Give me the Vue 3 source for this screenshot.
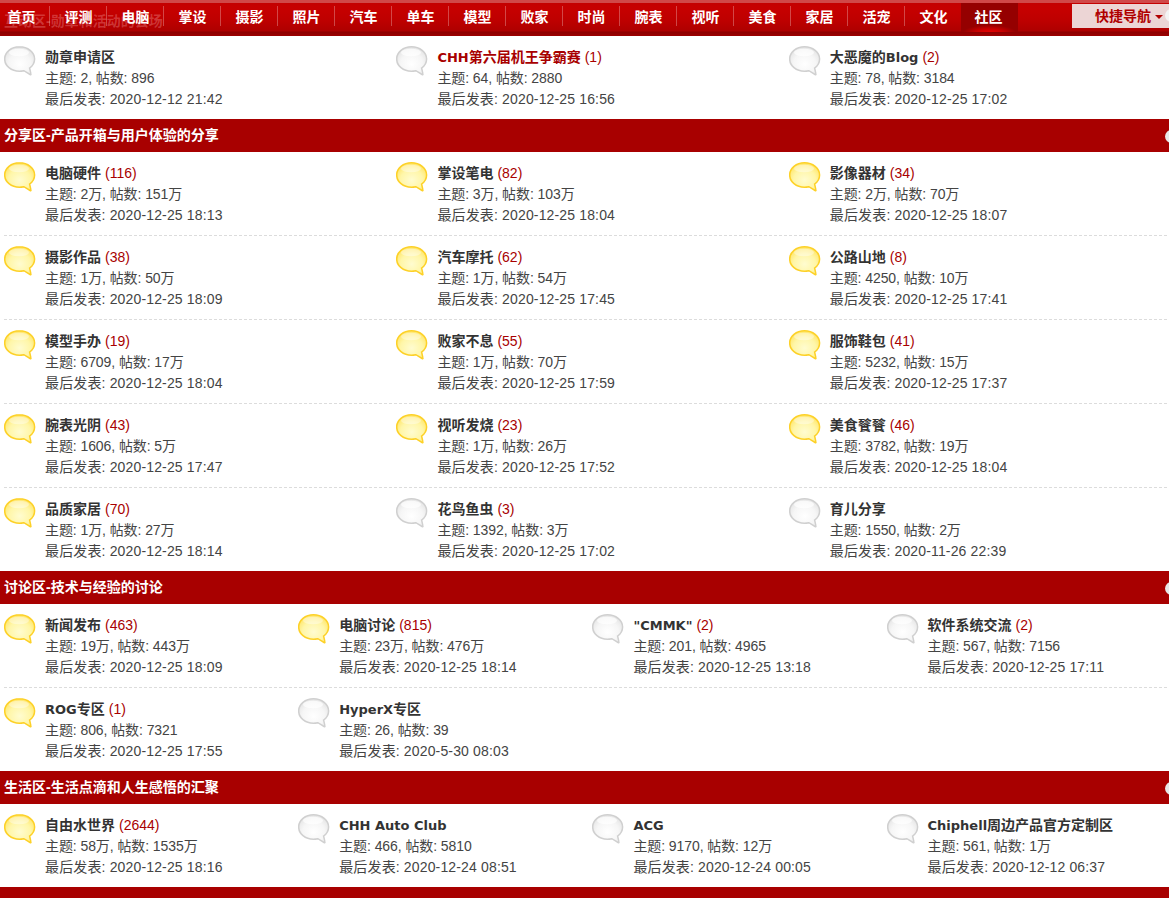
<script setup>
const navItems = ['首页','评测','电脑','掌设','摄影','照片','汽车','单车','模型','败家','时尚','腕表','视听','美食','家居','活宠','文化','社区']

const s1 = [[
  { name:'勋章申请区', stats:'主题: 2, 帖数: 896', last:'最后发表: 2020-12-12 21:42' },
  { name:'CHH第六届机王争霸赛', count:1, red:true, stats:'主题: 64, 帖数: 2880', last:'最后发表: 2020-12-25 16:56' },
  { name:'大恶魔的Blog', count:2, stats:'主题: 78, 帖数: 3184', last:'最后发表: 2020-12-25 17:02' },
]]
const s2 = [[
  { name:'电脑硬件', count:116, on:1, stats:'主题: 2万, 帖数: 151万', last:'最后发表: 2020-12-25 18:13' },
  { name:'掌设笔电', count:82, on:1, stats:'主题: 3万, 帖数: 103万', last:'最后发表: 2020-12-25 18:04' },
  { name:'影像器材', count:34, on:1, stats:'主题: 2万, 帖数: 70万', last:'最后发表: 2020-12-25 18:07' },
],[
  { name:'摄影作品', count:38, on:1, stats:'主题: 1万, 帖数: 50万', last:'最后发表: 2020-12-25 18:09' },
  { name:'汽车摩托', count:62, on:1, stats:'主题: 1万, 帖数: 54万', last:'最后发表: 2020-12-25 17:45' },
  { name:'公路山地', count:8, on:1, stats:'主题: 4250, 帖数: 10万', last:'最后发表: 2020-12-25 17:41' },
],[
  { name:'模型手办', count:19, on:1, stats:'主题: 6709, 帖数: 17万', last:'最后发表: 2020-12-25 18:04' },
  { name:'败家不息', count:55, on:1, stats:'主题: 1万, 帖数: 70万', last:'最后发表: 2020-12-25 17:59' },
  { name:'服饰鞋包', count:41, on:1, stats:'主题: 5232, 帖数: 15万', last:'最后发表: 2020-12-25 17:37' },
],[
  { name:'腕表光阴', count:43, on:1, stats:'主题: 1606, 帖数: 5万', last:'最后发表: 2020-12-25 17:47' },
  { name:'视听发烧', count:23, on:1, stats:'主题: 1万, 帖数: 26万', last:'最后发表: 2020-12-25 17:52' },
  { name:'美食餮餮', count:46, on:1, stats:'主题: 3782, 帖数: 19万', last:'最后发表: 2020-12-25 18:04' },
],[
  { name:'品质家居', count:70, on:1, stats:'主题: 1万, 帖数: 27万', last:'最后发表: 2020-12-25 18:14' },
  { name:'花鸟鱼虫', count:3, stats:'主题: 1392, 帖数: 3万', last:'最后发表: 2020-12-25 17:02' },
  { name:'育儿分享', stats:'主题: 1550, 帖数: 2万', last:'最后发表: 2020-11-26 22:39' },
]]
const s3 = [[
  { name:'新闻发布', count:463, on:1, stats:'主题: 19万, 帖数: 443万', last:'最后发表: 2020-12-25 18:09' },
  { name:'电脑讨论', count:815, on:1, stats:'主题: 23万, 帖数: 476万', last:'最后发表: 2020-12-25 18:14' },
  { name:'"CMMK"', count:2, stats:'主题: 201, 帖数: 4965', last:'最后发表: 2020-12-25 13:18' },
  { name:'软件系统交流', count:2, stats:'主题: 567, 帖数: 7156', last:'最后发表: 2020-12-25 17:11' },
],[
  { name:'ROG专区', count:1, on:1, stats:'主题: 806, 帖数: 7321', last:'最后发表: 2020-12-25 17:55' },
  { name:'HyperX专区', stats:'主题: 26, 帖数: 39', last:'最后发表: 2020-5-30 08:03' },
]]
const s4 = [[
  { name:'自由水世界', count:2644, on:1, stats:'主题: 58万, 帖数: 1535万', last:'最后发表: 2020-12-25 18:16' },
  { name:'CHH Auto Club', stats:'主题: 466, 帖数: 5810', last:'最后发表: 2020-12-24 08:51' },
  { name:'ACG', stats:'主题: 9170, 帖数: 12万', last:'最后发表: 2020-12-24 00:05' },
  { name:'Chiphell周边产品官方定制区', stats:'主题: 561, 帖数: 1万', last:'最后发表: 2020-12-12 06:37' },
]]

const sections = [
  { rows: s1, cols: 3 },
  { title:'分享区-产品开箱与用户体验的分享', rows: s2, cols: 3 },
  { title:'讨论区-技术与经验的讨论', rows: s3, cols: 4 },
  { title:'生活区-生活点滴和人生感悟的汇聚', rows: s4, cols: 4 },
  { title:'', rows: [], cols: 4 },
]

// Latin runs of a forum name are set a little smaller and wider than the CJK runs.
const parts = (name) => (name.match(/[\x00-\x7f]+|[^\x00-\x7f]+/g) || []).map((t) => ({
  t,
  latin: /^[\x00-\x7f]/.test(t),
}))
</script>

<template>
  <div class="page">
    <svg class="defs" width="0" height="0">
      <defs>
        <radialGradient id="bubble-on" cx="0.5" cy="0.62" r="0.62">
          <stop offset="0" stop-color="#fffcd0" />
          <stop offset="0.6" stop-color="#fff6a8" />
          <stop offset="1" stop-color="#ffe566" />
        </radialGradient>
        <radialGradient id="bubble-off" cx="0.5" cy="0.62" r="0.62">
          <stop offset="0" stop-color="#ffffff" />
          <stop offset="0.6" stop-color="#f6f6f6" />
          <stop offset="1" stop-color="#e4e4e4" />
        </radialGradient>
      </defs>
    </svg>

    <header class="nav">
      <span class="ghost">互动区-勋章和活动的会场</span>
      <ul class="nav-list">
        <li v-for="(item, i) in navItems" :key="item" class="nav-item" :class="{ active: i === navItems.length - 1 }">{{ item }}</li>
      </ul>
      <div class="quick">快捷导航<i class="caret"></i><i class="quick-dot"></i></div>
    </header>

    <section v-for="(sec, si) in sections" :key="si" class="section">
      <h2 v-if="sec.title !== undefined" class="bar">
        <span>{{ sec.title }}</span>
        <i class="toggle"></i>
      </h2>
      <div
        v-for="(row, ri) in sec.rows"
        :key="ri"
        class="row"
        :class="[sec.cols === 3 ? 'c3' : 'c4', { dashed: ri < sec.rows.length - 1 }]"
      >
        <div v-for="f in row" :key="f.name" class="forum">
          <svg class="bubble" width="32" height="30" viewBox="0 0 32 30">
            <path
              d="M15.500.8C7.200.8.700 6.200.700 13S7.200 25.200 15.500 25.200c1.500 0 3-.2 4.400-.5l6.200 3.800c.6.300 1 0 .8-.6l-1.300-5.900c3.200-2.200 5-5.600 5-9C30.600 6.200 23.800.8 15.500.8z"
              :fill="f.on ? 'url(#bubble-on)' : 'url(#bubble-off)'"
              :stroke="f.on ? '#fdd128' : '#d0d0d0'"
              stroke-width="1.5"
            />
            <ellipse cx="15" cy="6.500" rx="10" ry="3.800" fill="#fff" :opacity="f.on ? .4 : .7" />
          </svg>
          <div class="info">
            <div class="name-line">
              <b class="name" :class="{ red: f.red }"><span v-for="(p, pi) in parts(f.name)" :key="pi" :class="{ latin: p.latin }">{{ p.t }}</span></b>
              <span v-if="f.count" class="count">({{ f.count }})</span>
            </div>
            <div class="line stats">{{ f.stats }}</div>
            <div class="line last">{{ f.last }}</div>
          </div>
        </div>
      </div>
    </section>
  </div>
</template>

<style scoped>
.page {
  width: 1169px;
  height: 898px;
  overflow: hidden;
  position: relative;
  padding-top: 36px;
  box-sizing: border-box;
  background: #fff;
  font-family: "Liberation Sans", "Noto Sans CJK SC", sans-serif;
  font-size: 14px;
  color: #444;
}
.defs {
  position: absolute;
}
.nav {
  position: absolute;
  top: 0;
  left: 0;
  z-index: 2;
  width: 100%;
  height: 36px;
  box-sizing: border-box;
  display: flex;
  overflow: hidden;
  background: linear-gradient(#c40000 0, #c60000 6px, #bd0000 18px, #ae0000 28px, #8c0000 29px, #9c0000 33px);
  border-top: 3px solid #d04848;
}
.ghost {
  position: absolute;
  left: 4px;
  top: 7px;
  font-size: 14px;
  font-weight: 700;
  line-height: 22px;
  color: rgba(255, 190, 190, .28);
  white-space: nowrap;
}
.nav-list {
  position: relative;
  display: flex;
  list-style: none;
  margin: 0;
  padding: 0;
}
.nav-item {
  width: 57px;
  height: 29px;
  box-sizing: border-box;
  padding: 3px 0 0;
  line-height: 22px;
  text-align: center;
  color: #fff;
  font-size: 14px;
  font-weight: 700;
  white-space: nowrap;
  position: relative;
  left: -7px;
}
.nav-item::after {
  content: "";
  position: absolute;
  right: 0;
  top: 3px;
  height: 20px;
  width: 1px;
  background: rgba(255, 255, 255, .28);
}
.nav-item.active {
  left: -8px;
  padding-right: 2px;
  background: radial-gradient(ellipse 26px 7px at 50% 29px, #e60000 0, #cc0000 45%, transparent 100%), #950000;
}
.nav-item.active::after,
.nav-item:nth-last-child(2)::after {
  display: none;
}
.quick {
  position: absolute;
  left: 1072px;
  top: 1px;
  width: 97px;
  height: 24px;
  box-sizing: border-box;
  padding-left: 23px;
  line-height: 24px;
  background: #ecd5d5;
  color: #b00000;
  font-weight: 700;
  white-space: nowrap;
  overflow: hidden;
}
.caret {
  display: inline-block;
  margin-left: 4px;
  vertical-align: 2px;
  border-style: solid;
  border-width: 4px 4px 0;
  border-color: #b00000 transparent transparent;
}
.quick-dot {
  position: absolute;
  left: 93px;
  top: 5px;
  width: 13px;
  height: 13px;
  border-radius: 50%;
  background: #f4f4f4;
}
.bar {
  margin: 0;
  height: 33px;
  line-height: 33px;
  padding-left: 4px;
  background: #a80000;
  color: #fff;
  font-size: 14px;
  font-weight: 700;
  position: relative;
  overflow: hidden;
}
.toggle {
  position: absolute;
  left: 1165px;
  top: 11px;
  width: 13px;
  height: 13px;
  border-radius: 50%;
  background: #e8e8e8;
}
.row {
  display: grid;
  height: 83px;
  box-sizing: border-box;
  margin-left: 4px;
}
.row.c3 {
  grid-template-columns: repeat(3, 392.4px);
  width: 1163px;
}
.row.c4 {
  grid-template-columns: repeat(4, 294.2px);
  width: 1165px;
}
.row.dashed {
  height: 84px;
  background: repeating-linear-gradient(90deg, #dcdcdc 0 3px, transparent 3px 5px) left bottom / 100% 1px no-repeat;
}
.forum {
  display: flex;
  min-width: 0;
  white-space: nowrap;
}
.bubble {
  flex: none;
  margin-top: 10px;
}
.info {
  margin-left: 9px;
  padding-top: 11px;
}
.name-line,
.line {
  height: 21px;
  line-height: 21px;
}
.name {
  font-weight: 700;
  color: #333;
}
.latin {
  font-family: "DejaVu Sans", sans-serif;
  font-size: 13px;
}
.name.red {
  color: #a80000;
}
.count {
  margin-left: 4px;
  color: #a80000;
}
.line {
  color: #444;
}
.line.stats {
  letter-spacing: -.08px;
}
.line.last {
  letter-spacing: .15px;
}
</style>
